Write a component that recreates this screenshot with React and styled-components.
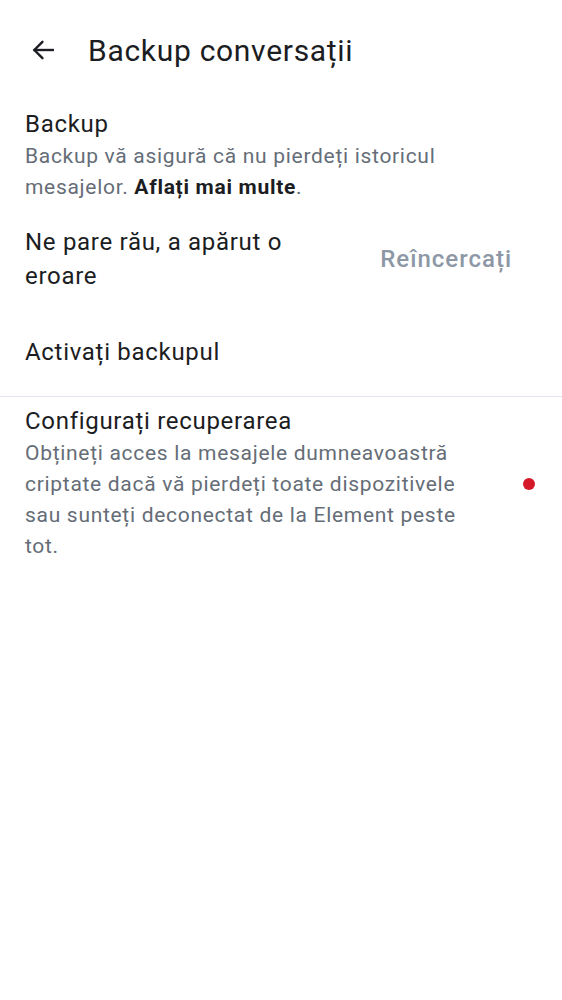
import React from "react";
import styled, { createGlobalStyle } from "styled-components";

const Global = createGlobalStyle`
  html, body { margin: 0; padding: 0; background: #ffffff; }
  body { font-family: Roboto, "Noto Sans", sans-serif; -webkit-font-smoothing: antialiased; }
`;

const Page = styled.div`
  width: 562px;
  min-height: 1000px;
  background: #fff;
  color: #1b1d22;
`;

const TopBar = styled.header`
  display: flex;
  align-items: center;
  height: 100px;
  padding-left: 28px;
  box-sizing: border-box;
`;

const BackButton = styled.button`
  display: flex;
  align-items: center;
  justify-content: center;
  width: 30px;
  height: 30px;
  padding: 0;
  border: none;
  background: none;
  color: #1b1d22;
  margin-right: 30px;
`;

const Title = styled.h1`
  margin: 0;
  font-size: 30px;
  font-weight: 400;
  letter-spacing: 0.7px;
`;

const Section = styled.section`
  padding: ${(p) => p.$pad || "8px 25px 0"};
  display: flex;
  align-items: center;
  gap: 16px;
  ${(p) => p.$divider && "border-top: 1px solid #e1e6ec;"}
`;

const TextCol = styled.div`
  flex: 1;
  min-width: 0;
  max-width: ${(p) => p.$max || "none"};
`;

const ItemTitle = styled.div`
  font-size: 24px;
  letter-spacing: 0.7px;
  line-height: ${(p) => p.$lh || "30px"};
  color: #1b1d22;
`;

const Desc = styled.div`
  font-size: 21px;
  letter-spacing: 0.7px;
  line-height: 31px;
  color: #656d77;
  margin-top: 2px;
`;

const Link = styled.a`
  color: #1b1d22;
  font-weight: 700;
  text-decoration: none;
`;

const Retry = styled.button`
  border: none;
  background: none;
  padding: 0;
  font-family: inherit;
  font-size: 24px;
  font-weight: 500;
  letter-spacing: 1px;
  color: #8d97a5;
  margin-left: auto;
  margin-right: 25px;
`;

const Dot = styled.span`
  width: 12px;
  height: 12px;
  border-radius: 50%;
  background: #d51928;
  flex: none;
  margin-left: auto;
  margin-right: 2px;
`;

export default function App() {
  return (
    <Page>
      <Global />
      <TopBar>
        <BackButton aria-label="Back">
          <svg width="26" height="26" viewBox="0 0 24 24" fill="none" stroke="currentColor" strokeWidth="2.2" strokeLinecap="square">
            <path d="M21 12H4.5" />
            <path d="M11.5 4.5L4 12l7.5 7.5" strokeLinecap="round" strokeLinejoin="miter" />
          </svg>
        </BackButton>
        <Title>Backup conversații</Title>
      </TopBar>

      <Section $pad="9px 25px 0">
        <TextCol $max="480px">
          <ItemTitle>Backup</ItemTitle>
          <Desc>
            Backup vă asigură că nu pierdeți istoricul mesajelor. <Link>Aflați mai multe</Link>.
          </Desc>
        </TextCol>
      </Section>

      <Section $pad="22px 25px 0">
        <TextCol $max="300px">
          <ItemTitle $lh="34px">Ne pare rău, a apărut o eroare</ItemTitle>
        </TextCol>
        <Retry>Reîncercați</Retry>
      </Section>

      <Section $pad="44px 25px 29px">
        <TextCol>
          <ItemTitle>Activați backupul</ItemTitle>
        </TextCol>
      </Section>

      <Section $divider $pad="9px 25px">
        <TextCol $max="445px">
          <ItemTitle>Configurați recuperarea</ItemTitle>
          <Desc>
            Obțineți acces la mesajele dumneavoastră criptate dacă vă pierdeți toate dispozitivele sau sunteți deconectat de la Element peste tot.
          </Desc>
        </TextCol>
        <Dot />
      </Section>
    </Page>
  );
}
